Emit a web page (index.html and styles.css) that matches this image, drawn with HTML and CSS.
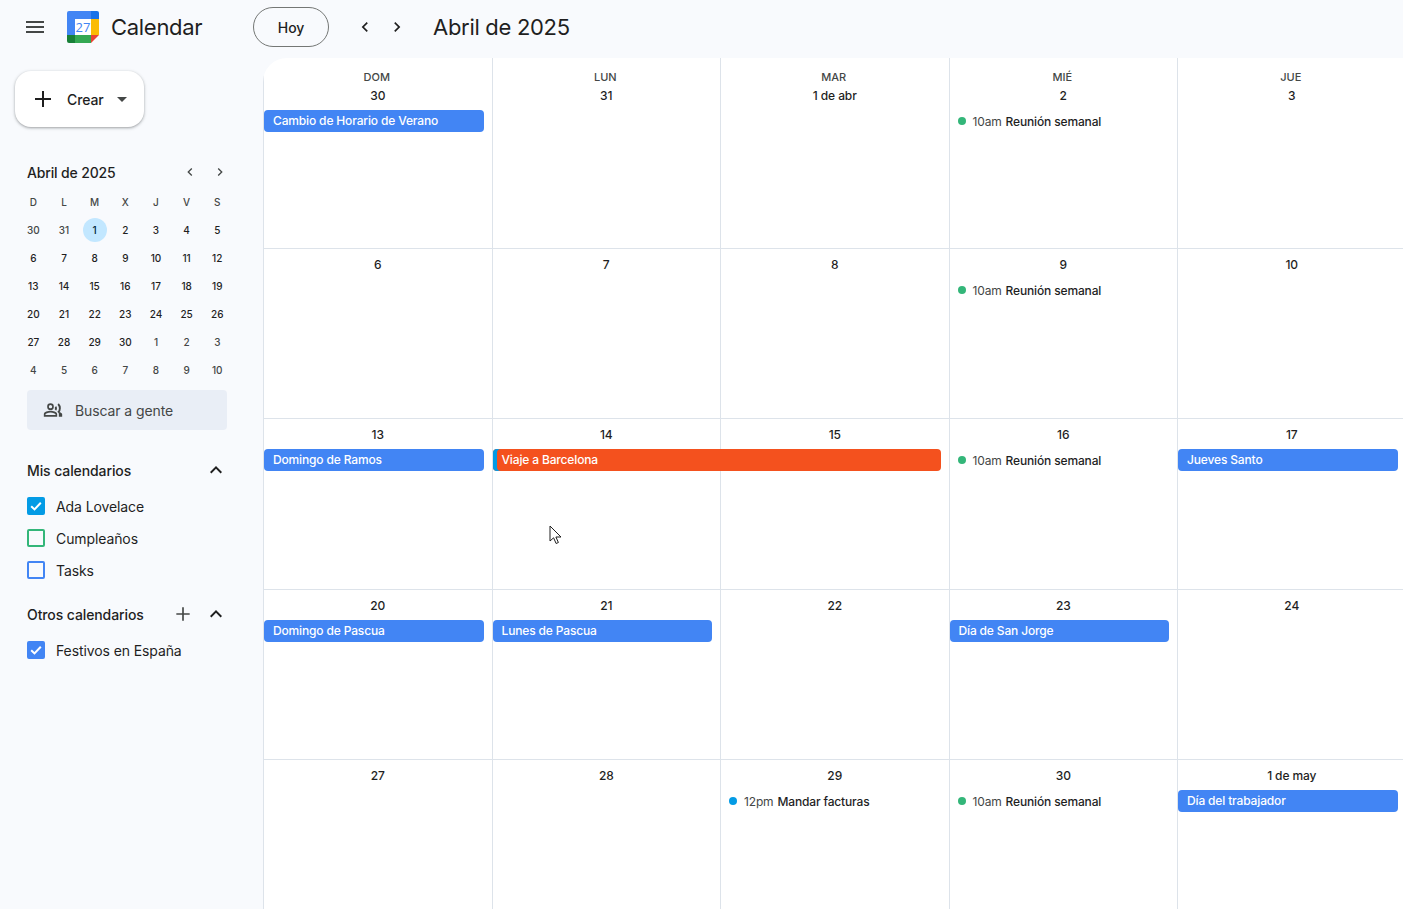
FILE: index.html
```html
<!DOCTYPE html>
<html lang="es">
<head>
<meta charset="utf-8">
<title>Calendar</title>
<link rel="stylesheet" href="styles.css">
</head>
<body>
<header class="topbar">
  <div class="brand">
    <button class="menu" aria-label="Menú"><svg width="24" height="24" viewBox="0 0 24 24"><path d="M3 18h18v-2H3v2zm0-5h18v-2H3v2zm0-7v2h18V6H3z" fill="#444746"/></svg></button>
    <svg class="logo" width="32" height="32" viewBox="0 0 32 32">
      <path d="M8 0H2a2 2 0 0 0-2 2v22h8V8h16V0z" fill="#4285f4"/>
      <path d="M24 0h6a2 2 0 0 1 2 2v6h-8z" fill="#1a73e8"/>
      <rect x="24" y="8" width="8" height="16" fill="#fbbc04"/>
      <rect x="8" y="24" width="16" height="8" fill="#34a853"/>
      <path d="M0 24h8v8H2a2 2 0 0 1-2-2z" fill="#188038"/>
      <path d="M24 24h8l-8 8z" fill="#ea4335"/>
      <rect x="8" y="8" width="16" height="16" fill="#fff"/>
      <text x="16" y="21" text-anchor="middle" class="logo-num">27</text>
    </svg>
    <span class="brand-name">Calendar</span>
  </div>
  <button class="today">Hoy</button>
  <div class="nav">
    <svg class="chev" width="20" height="20" viewBox="0 0 24 24"><path d="M15.4 7.4 14 6l-6 6 6 6 1.4-1.4L10.8 12z"/></svg>
    <svg class="chev" width="20" height="20" viewBox="0 0 24 24"><path d="M8.6 16.6 10 18l6-6-6-6-1.4 1.4L13.2 12z"/></svg>
  </div>
  <h1 class="title">Abril de 2025</h1>
</header>
<div class="body">
  <aside class="side">
    <button class="create">
      <svg width="24" height="24" viewBox="0 0 24 24"><path d="M20 13h-7v7h-2v-7H4v-2h7V4h2v7h7z" fill="#1f1f1f"/></svg>
      <span class="create-label">Crear</span>
      <span class="caret"></span>
    </button>
    <section class="mini">
      <div class="mini-head">
        <span class="mini-title">Abril de 2025</span>
        <svg class="mini-chev" width="16" height="16" viewBox="0 0 24 24"><path d="M15.4 7.4 14 6l-6 6 6 6 1.4-1.4L10.8 12z"/></svg>
        <svg class="mini-chev" width="16" height="16" viewBox="0 0 24 24"><path d="M8.6 16.6 10 18l6-6-6-6-1.4 1.4L13.2 12z"/></svg>
      </div>
      <div class="mini-grid">
        <span class="wd">D</span><span class="wd">L</span><span class="wd">M</span><span class="wd">X</span><span class="wd">J</span><span class="wd">V</span><span class="wd">S</span>
        <span class="out">30</span><span class="out">31</span><span class="sel"><b>1</b></span><span>2</span><span>3</span><span>4</span><span>5</span>
        <span>6</span><span>7</span><span>8</span><span>9</span><span>10</span><span>11</span><span>12</span>
        <span>13</span><span>14</span><span>15</span><span>16</span><span>17</span><span>18</span><span>19</span>
        <span>20</span><span>21</span><span>22</span><span>23</span><span>24</span><span>25</span><span>26</span>
        <span>27</span><span>28</span><span>29</span><span>30</span><span class="out">1</span><span class="out">2</span><span class="out">3</span>
        <span class="out">4</span><span class="out">5</span><span class="out">6</span><span class="out">7</span><span class="out">8</span><span class="out">9</span><span class="out">10</span>
      </div>
    </section>
    <div class="search">
      <svg width="20" height="20" viewBox="0 0 24 24"><path fill="#444746" d="M9 13c-2.7 0-8 1.3-8 4v3h16v-3c0-2.7-5.3-4-8-4zm-6 5v-1c0-.6 3.1-2 6-2s6 1.400 6 2v1H3zM9 12a4 4 0 1 0 0-8 4 4 0 0 0 0 8zm0-6a2 2 0 1 1 0 4 2 2 0 0 1 0-4zm6.800 1.200a4.900 4.900 0 0 1 0 5.600l-1.700-1.700a2.600 2.600 0 0 0 0-2.200zM19 4a8.700 8.700 0 0 1 0 12l-1.600-1.600a6.500 6.500 0 0 0 0-8.800zm-2 9.200c1.700.8 6 2 6 3.800v3h-4v-3c0-1.500-.8-2.800-2-3.800z"/></svg>
      <span>Buscar a gente</span>
    </div>
    <div class="group-head first">
      <span class="group-title">Mis calendarios</span>
      <svg class="up" width="24" height="24" viewBox="0 0 24 24"><path d="M7.400 15.400 12 10.800l4.600 4.600L18 14l-6-6-6 6z"/></svg>
    </div>
    <ul class="cals">
      <li><span class="box on sky"><svg width="18" height="18" viewBox="0 0 18 18"><path d="M4.200 9.200 7.500 12.400 13.800 5.800" class="tick"/></svg></span>Ada Lovelace</li>
      <li><span class="box green"></span>Cumpleaños</li>
      <li><span class="box blue"></span>Tasks</li>
    </ul>
    <div class="group-head second">
      <span class="group-title">Otros calendarios</span>
      <svg class="add" width="20" height="20" viewBox="0 0 24 24"><path d="M20 13h-7v7h-2v-7H4v-2h7V4h2v7h7z" fill="#444746"/></svg>
      <svg class="up" width="24" height="24" viewBox="0 0 24 24"><path d="M7.400 15.400 12 10.800l4.600 4.600L18 14l-6-6-6 6z"/></svg>
    </div>
    <ul class="cals">
      <li><span class="box on blue-fill"><svg width="18" height="18" viewBox="0 0 18 18"><path d="M4.200 9.200 7.500 12.400 13.800 5.800" class="tick"/></svg></span>Festivos en España</li>
    </ul>
  </aside>
  <main class="month">
    <div class="cell"><span class="dow">DOM</span><span class="date">30</span><div class="pill">Cambio de Horario de Verano</div></div>
    <div class="cell"><span class="dow">LUN</span><span class="date">31</span></div>
    <div class="cell"><span class="dow">MAR</span><span class="date">1 de abr</span></div>
    <div class="cell"><span class="dow">MIÉ</span><span class="date">2</span><div class="timed"><i class="dot g"></i><span class="hour">10am</span><span class="what">Reunión semanal</span></div></div>
    <div class="cell"><span class="dow">JUE</span><span class="date">3</span></div>

    <div class="cell"><span class="date">6</span></div>
    <div class="cell"><span class="date">7</span></div>
    <div class="cell"><span class="date">8</span></div>
    <div class="cell"><span class="date">9</span><div class="timed"><i class="dot g"></i><span class="hour">10am</span><span class="what">Reunión semanal</span></div></div>
    <div class="cell"><span class="date">10</span></div>

    <div class="cell"><span class="date">13</span><div class="pill">Domingo de Ramos</div></div>
    <div class="cell"><span class="date">14</span><div class="pill trip">Viaje a Barcelona</div></div>
    <div class="cell"><span class="date">15</span></div>
    <div class="cell"><span class="date">16</span><div class="timed"><i class="dot g"></i><span class="hour">10am</span><span class="what">Reunión semanal</span></div></div>
    <div class="cell"><span class="date">17</span><div class="pill">Jueves Santo</div></div>

    <div class="cell"><span class="date">20</span><div class="pill">Domingo de Pascua</div></div>
    <div class="cell"><span class="date">21</span><div class="pill">Lunes de Pascua</div></div>
    <div class="cell"><span class="date">22</span></div>
    <div class="cell"><span class="date">23</span><div class="pill">Día de San Jorge</div></div>
    <div class="cell"><span class="date">24</span></div>

    <div class="cell"><span class="date">27</span></div>
    <div class="cell"><span class="date">28</span></div>
    <div class="cell"><span class="date">29</span><div class="timed"><i class="dot b"></i><span class="hour">12pm</span><span class="what">Mandar facturas</span></div></div>
    <div class="cell"><span class="date">30</span><div class="timed"><i class="dot g"></i><span class="hour">10am</span><span class="what">Reunión semanal</span></div></div>
    <div class="cell"><span class="date">1 de may</span><div class="pill">Día del trabajador</div></div>
  </main>
</div>
<svg class="cursor" width="14" height="20" viewBox="0 0 14 20"><path d="M1 1v15l3.600-3.200 2.500 5.700 2.300-1-2.500-5.500H12z" fill="#fff" stroke="#1f1f1f" stroke-width="1"/></svg>
</body>
</html>
```

FILE: styles.css
```css
* { box-sizing: border-box; }
html, body { height: 100%; }
body {
  margin: 0;
  height: 909px;
  overflow: hidden;
  background: #f8fafd;
  color: #1f1f1f;
  font-family: Inter, "Noto Sans", "Liberation Sans", sans-serif;
  display: flex;
  flex-direction: column;
}
button { font: inherit; color: inherit; }

/* top bar */
.topbar { display: flex; align-items: center; height: 58px; flex: none; padding-bottom: 4px; }
.brand { width: 253px; flex: none; display: flex; align-items: center; padding-left: 23px; }
.menu { border: 0; background: none; padding: 0; width: 24px; height: 24px; display: block; }
.logo { margin-left: 20px; flex: none; }
.logo-num { font-size: 13px; font-weight: 500; fill: #4285f4; font-family: "Open Sans", sans-serif; }
.brand-name { margin-left: 12px; font-size: 22px; letter-spacing: -0.3px; color: #1f1f1f; }
.today {
  width: 76px; height: 40px; border: 1px solid #747775; border-radius: 20px;
  background: transparent; font-size: 14px; font-weight: 500; letter-spacing: -0.1px;
}
.nav { display: flex; gap: 12px; margin-left: 26px; }
.chev { fill: #1f1f1f; display: block; }
.title { margin: 0 0 0 26px; font-size: 22px; font-weight: 400; letter-spacing: -0.3px; }

/* layout */
.body { flex: 1; display: flex; min-height: 0; }
.side { width: 263px; flex: none; padding: 13px 0 0 15px; }

/* create */
.create {
  width: 129px; height: 56px; border: 0; border-radius: 16px; background: #fff;
  display: flex; align-items: center; padding: 0 0 0 16px;
  box-shadow: 0 1px 2px rgba(60,64,67,.3), 0 1px 3px 1px rgba(60,64,67,.15);
}
.create-label { margin-left: 12px; font-size: 14px; font-weight: 500; letter-spacing: -0.1px; }
.caret {
  margin-left: 13px; width: 0; height: 0;
  border-left: 5px solid transparent; border-right: 5px solid transparent; border-top: 5px solid #444746;
}

/* mini calendar */
.mini { margin-top: 34px; margin-left: 3px; width: 214px; }
.mini-head { display: flex; align-items: center; height: 22px; padding-left: 9px; }
.mini-title { font-size: 14px; font-weight: 500; letter-spacing: -0.15px; margin-right: auto; }
.mini-chev { fill: #444746; margin-right: 22px; display: block; }
.mini-chev:last-child { margin-right: 4px; margin-left: -8px; }
.mini-grid { display: grid; grid-template-columns: repeat(7, 30.67px); grid-auto-rows: 28px; margin-top: 5px; }
.mini-grid span { display: flex; align-items: center; justify-content: center; font-size: 10px; font-weight: 500; color: #1f1f1f; }
.mini-grid .wd { color: #444746; }
.mini-grid .out { color: #444746; }
.mini-grid .sel b {
  width: 24px; height: 24px; border-radius: 50%; background: #c2e7ff; color: #001d35;
  font-weight: 500; display: flex; align-items: center; justify-content: center;
}

/* people */
.search {
  margin: 6px 0 0 12px; width: 200px; height: 40px; border-radius: 4px; background: #e9eef6;
  display: flex; align-items: center; padding-left: 16px; gap: 12px;
  font-size: 14px; color: #444746; letter-spacing: -0.1px;
}

/* calendars */
.group-head { display: flex; align-items: center; height: 24px; margin-left: 12px; width: 200px; }
.group-head.first { margin-top: 28px; }
.group-head.second { margin-top: 16px; }
.group-title { font-size: 14px; font-weight: 500; letter-spacing: -0.1px; margin-right: auto; }
.up { fill: #1f1f1f; display: block; margin-right: -1px; }
.add { display: block; margin-right: 11px; }
.cals { list-style: none; margin: 8px 0 0 12px; padding: 0; }
.cals li { display: flex; align-items: center; height: 32px; font-size: 14px; color: #1f1f1f; letter-spacing: -0.1px; }
.box { width: 18px; height: 18px; border-radius: 2px; border: 2px solid; margin-right: 11px; flex: none; display: block; position: relative; }
.box svg { display: block; margin: -2px; }
.green { border-color: #33b679; }
.blue { border-color: #4285f4; }
.sky { background: #039be5; border-color: #039be5; }
.blue-fill { background: #4285f4; border-color: #4285f4; }
.tick { fill: none; stroke: #fff; stroke-width: 2; }

/* month */
.month {
  flex: none; width: 1142.5px; height: 851px; background: #fff;
  border-top-left-radius: 24px; overflow: hidden;
  display: grid; grid-template-columns: repeat(5, 228.5px);
  grid-template-rows: 191px 170px 171px 170px 149px;
}
.cell {
  border-left: 1px solid #dde3ea; border-bottom: 1px solid #dde3ea;
  display: flex; flex-direction: column; align-items: stretch;
  padding-top: 10px; min-width: 0;
}
.cell:nth-last-child(-n+5) { border-bottom: 0; }
.dow { text-align: center; font-size: 11px; font-weight: 500; color: #444746; line-height: 16px; height: 16px; margin-top: 1px; padding-right: 2px; }
.date { text-align: center; font-size: 12px; font-weight: 500; color: #1f1f1f; line-height: 16px; height: 16px; padding-right: 0; letter-spacing: -0.1px; margin-top: 0; }
.cell .dow + .date { margin-top: 3px; }
.cell:nth-child(n+6) { padding-top: 8px; }
.pill {
  position: relative; z-index: 1;
  margin: 6px 8px 0 0; height: 22px; line-height: 22px; border-radius: 4px;
  background: #4285f4; color: #fff; font-size: 12px; font-weight: 500; padding-left: 9px;
  letter-spacing: -0.15px; white-space: nowrap;
}
.pill.trip { background: #f4511e; margin-right: calc(-228.5px + 8px); box-shadow: inset 4px 0 0 #039be5; }
.timed { display: flex; align-items: center; height: 22px; margin-top: 6px; padding-left: 8px; font-size: 12px; letter-spacing: -0.15px; white-space: nowrap; }
.dot { width: 8px; height: 8px; border-radius: 50%; margin-right: 7px; flex: none; }
.dot.g { background: #33b679; }
.dot.b { background: #039be5; }
.hour { color: #444746; margin-right: 4px; }
.what { font-weight: 500; color: #1f1f1f; }

/* mouse pointer */
.cursor { position: absolute; left: 549px; top: 525px; }
```
